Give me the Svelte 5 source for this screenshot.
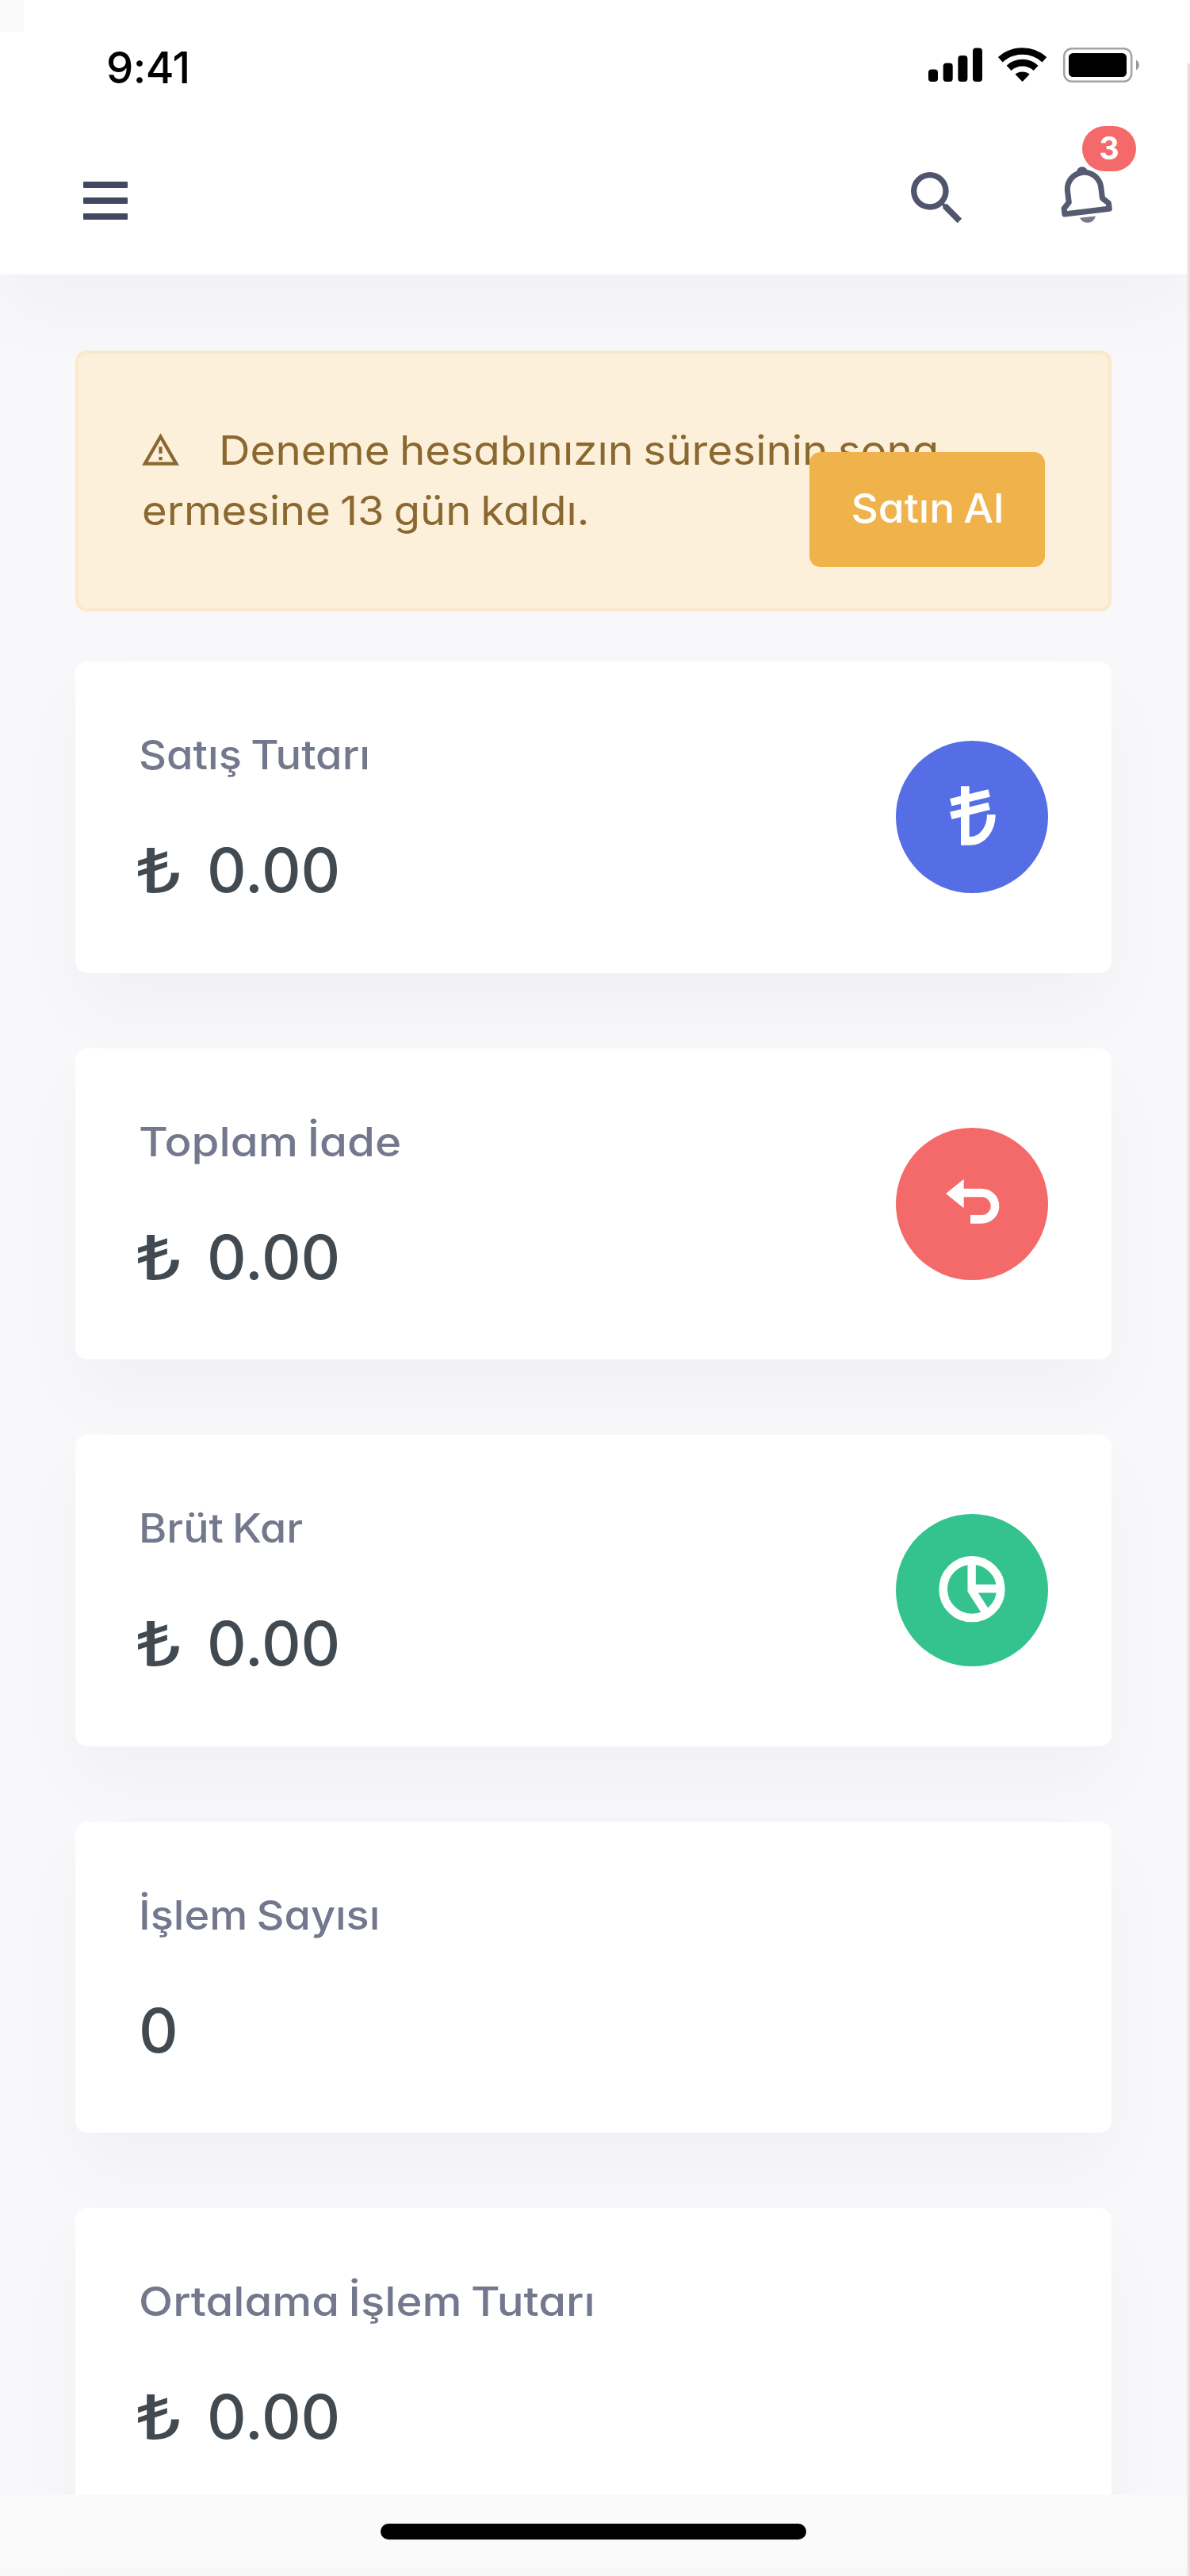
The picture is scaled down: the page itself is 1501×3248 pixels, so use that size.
<script>
  const cards = [
    { label: 'Satış Tutarı', value: '0.00', money: true, icon: 'lira', fit: 'a' },
    { label: 'Toplam İade', value: '0.00', money: true, icon: 'undo', fit: 'b' },
    { label: 'Brüt Kar', value: '0.00', money: true, icon: 'pie', fit: 'c' },
    { label: 'İşlem Sayısı', value: '0', money: false, icon: null, fit: 'd' },
    { label: 'Ortalama İşlem Tutarı', value: '0.00', money: true, icon: null, fit: 'e' }
  ];
</script>

<div class="screen">
  <header class="top">
    <div class="status">
      <span class="time">9:41</span>
      <svg class="signals" viewBox="1171 58 268 47" fill="#000">
        <rect x="1171" y="87.5" width="12" height="15.5" rx="4" />
        <rect x="1189.7" y="79.5" width="12" height="23.5" rx="4" />
        <rect x="1208.4" y="70" width="12" height="33" rx="4" />
        <rect x="1227" y="60.5" width="12" height="42.5" rx="4" />
        <g fill="none" stroke="#000" stroke-width="8.6">
          <path d="M1261.8 75.2A41.5 41.5 0 0 1 1317.4 75.2" />
          <path d="M1272.6 85.8A25 25 0 0 1 1306.6 85.8" />
        </g>
        <path d="M1289.6 103L1280.6 93.7A14 14 0 0 1 1298.6 93.7Z" />
        <rect x="1342.2" y="61.2" width="85" height="41.6" rx="10" fill="none" stroke="#a3a3a3" stroke-width="2.5" />
        <rect x="1348" y="67" width="73" height="30" rx="5.5" />
        <path d="M1433 75.5a7.5 7.5 0 0 1 0 13z" fill="#999" />
      </svg>
    </div>
    <div class="nav">
      <div class="menu"><i></i><i></i><i></i></div>
      <svg class="search" viewBox="0 0 24 24"><path fill="#4f556c" d="M9.5,3A6.5,6.5 0 0,1 16,9.5C16,11.11 15.41,12.59 14.44,13.73L14.71,14H15.5L20.5,19L19,20.5L14,15.5V14.71L13.73,14.44C12.59,15.41 11.11,16 9.5,16A6.5,6.5 0 0,1 3,9.5A6.5,6.5 0 0,1 9.5,3M9.5,5C7,5 5,7 5,9.5C5,12 7,14 9.5,14C12,14 14,12 14,9.5C14,7 12,5 9.5,5Z" /></svg>
      <div class="bell">
        <svg viewBox="0 0 24 24"><g fill="#555b70" transform="rotate(-7 12 12)"><path d="M19 13.586V10c0-3.217-2.185-5.927-5.145-6.742C13.562 2.52 12.846 2 12 2s-1.562.52-1.855 1.258C7.185 4.074 5 6.783 5 10v3.586l-1.707 1.707A.996.996 0 0 0 3 16v2a1 1 0 0 0 1 1h16a1 1 0 0 0 1-1v-2a.996.996 0 0 0-.293-.707L19 13.586zM19 17H5v-.586l1.707-1.707A.996.996 0 0 0 7 14v-4c0-2.757 2.243-5 5-5s5 2.243 5 5v4c0 .266.105.52.293.707L19 16.414V17z" /><path opacity=".8" d="M12 22a2.98 2.98 0 0 0 2.818-2H9.182A2.98 2.98 0 0 0 12 22z" /></g></svg>
        <span class="badge">3</span>
      </div>
    </div>
  </header>

  <main>
    <section class="alert">
      <p>
        <svg class="warn" viewBox="0 0 24 24"><path fill="#8a682f" fill-rule="evenodd" d="M12,2L1,21H23M12,6L19.53,19H4.47M11,10V14H13V10M11,16V18H13V16" /></svg><span class="l1">Deneme hesabınızın süresinin sona</span><br /><span class="l2">ermesine 13 gün kaldı.</span>
      </p>
      <button><span>Satın Al</span></button>
    </section>

    {#each cards as card}
      <section class="card">
        <div class="info">
          <div class="label {card.fit}">{card.label}</div>
          <div class="value">{#if card.money}<span class="cur">₺</span>{/if}<span>{card.value}</span></div>
        </div>
        {#if card.icon}
          <div class="disc {card.icon}">
            <svg viewBox="0 0 576 576" fill="none" stroke="#fff" stroke-width="32">
              {#if card.icon === 'lira'}
                <path d="M262 172V379H282C327 379 361 335 361 279" />
                <path d="M208 233L353 198M208 283L353 247" stroke-width="29" />
              {:else if card.icon === 'undo'}
                <path d="M250 246H325A50 50 0 0 1 325 346H282" />
                <path d="M189 249L257 194V304Z" fill="#fff" stroke="none" />
              {:else}
                <circle cx="288" cy="284" r="109" />
                <path d="M287 180V291M287 282H392M284 284L342 374" stroke-width="31" />
              {/if}
            </svg>
          </div>
        {/if}
      </section>
    {/each}
  </main>

  <div class="corner"></div>
  <div class="edge"></div>
  <footer><div class="pill"></div></footer>
</div>

<style>
  :global(body) { margin: 0; background: #f8f8fb; }
  .screen {
    position: relative;
    width: 1501px;
    height: 3248px;
    overflow: hidden;
    background: #f8f8fb;
    font-family: Inter, "Liberation Sans", sans-serif;
    font-feature-settings: "cv11";
    font-size: 50.7px;
  }
  .top {
    position: relative;
    z-index: 2;
    height: 346px;
    background: #fff;
    box-shadow: 0 47px 94px rgba(18, 38, 63, .03);
  }
  .status {
    display: flex;
    justify-content: space-between;
    align-items: flex-start;
    height: 105px;
    box-sizing: border-box;
    padding: 58px 62px 0 134px;
  }
  .time { font-size: 54.5px; line-height: 55px; font-weight: 500; letter-spacing: -.6px; font-feature-settings: normal; }
  .signals { width: 268px; height: 47px; }
  .nav { display: flex; align-items: flex-start; padding: 101px 90px 0 105px; }
  .menu { display: flex; flex-direction: column; gap: 12px; width: 56px; margin: 23px auto 0 0; }
  .menu i { height: 8px; background: #434861; border-radius: 1px; }
  .search { width: 88px; height: 88px; margin-right: 100px; }
  .bell { position: relative; width: 85px; height: 85px; margin-top: -3px; }
  .bell svg { display: block; width: 85px; height: 85px; }
  .badge {
    position: absolute;
    left: 39px;
    top: -44px;
    width: 68px;
    height: 57px;
    border-radius: 29px;
    background: #f46a6a;
    color: #fff;
    font-size: 39px;
    font-weight: 700;
    line-height: 55px;
    text-align: center;
  }
  main { padding: 96px 99px 0 95px; }
  .alert {
    position: relative;
    height: 329px;
    box-sizing: border-box;
    padding: 84px 82px 0 80px;
    margin-bottom: 63px;
    background: #fcf0db;
    border: 4px solid #fce9cb;
    border-radius: 14px;
    color: #8a682f;
  }
  .alert p { margin: 0; line-height: 76px; white-space: nowrap; }
  .l1, .l2, .label, button span { display: inline-block; word-spacing: -3px; transform-origin: 0 50%; }
  .l1 { transform: scaleX(1.081); }
  .l2 { transform: scaleX(1.072); }
  .warn { width: 51px; height: 51px; margin: 0 48px 0 -2px; vertical-align: -7px; }
  .alert button {
    position: absolute;
    right: 80px;
    top: 124px;
    width: 297px;
    height: 145px;
    padding: 0 0 5px;
    border: 0;
    border-radius: 14px;
    background: #f0b34c;
    color: #fff;
    font: inherit;
    font-weight: 500;
    font-feature-settings: inherit;
  }
  button span { transform: scaleX(1.05); transform-origin: 50% 50%; }
  .card {
    display: flex;
    justify-content: space-between;
    align-items: center;
    height: 392.5px;
    box-sizing: border-box;
    padding: 0 80px;
    margin-bottom: 95px;
    background: #fff;
    border-radius: 15px;
    box-shadow: 0 47px 94px rgba(18, 38, 63, .03);
  }
  .info { align-self: flex-start; padding-top: 80px; }
  .label { display: block; width: max-content; line-height: 76px; font-weight: 500; color: #74788d; white-space: nowrap; }
  .label.a { transform: scaleX(1.07); }
  .label.b { transform: scaleX(1.115); }
  .label.c { transform: scaleX(1.062); }
  .label.d { transform: scaleX(1.067); }
  .label.e { transform: scaleX(1.11); }
  .value { display: flex; margin-top: 47px; line-height: 120px; font-size: 77px; font-weight: 500; color: #414a51; }
  .cur { width: 86px; font-weight: 400; transform: scaleX(1.38); transform-origin: 0 50%; margin-left: -6px; margin-right: 6px; }
  .disc { width: 192px; height: 192px; border-radius: 50%; }
  .disc svg { display: block; width: 100%; height: 100%; }
  .lira { background: #556ee6; }
  .undo { background: #f46a6a; }
  .pie { background: #34c38f; }
  .corner { position: absolute; z-index: 3; left: 0; top: 0; width: 30px; height: 40px; background: #fafafa; }
  .edge { position: absolute; z-index: 3; right: 0; top: 80px; bottom: 0; width: 4px; background: linear-gradient(90deg, #ededf0, #dcdcdc); }
  footer {
    position: absolute;
    z-index: 2;
    left: 0;
    right: 4px;
    top: 3146px;
    height: 92px;
    display: flex;
    align-items: center;
    justify-content: center;
    background: #fafafa;
  }
  .pill { width: 537px; height: 20px; border-radius: 10px; background: #000; }
</style>
